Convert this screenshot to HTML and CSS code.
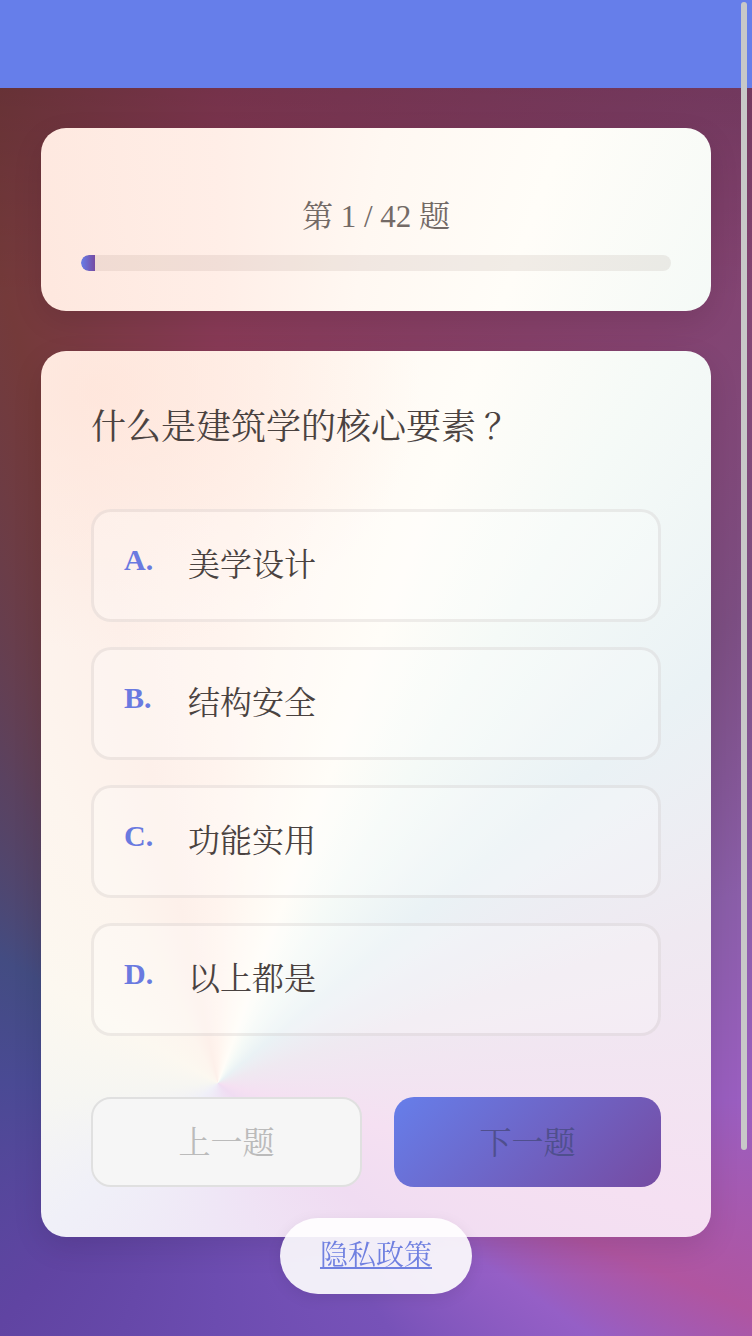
FILE: index.html
```html
<!DOCTYPE html>
<html lang="zh-CN">
<head>
<meta charset="utf-8">
<title>建筑学测验</title>
<link rel="stylesheet" href="styles.css">
</head>
<body>
<header class="topbar"></header>
<main class="quiz">
  <section class="card progress-card">
    <div class="progress-text">第 1 / 42 题</div>
    <div class="progress-track"><div class="progress-fill" style="width:2.38%"></div></div>
  </section>
  <section class="card question-card">
    <h2 class="question">什么是建筑学的核心要素<span class="qmark">？</span></h2>
    <div class="options">
      <div class="option"><span class="option-label">A.</span><span class="option-text">美学设计</span></div>
      <div class="option"><span class="option-label">B.</span><span class="option-text">结构安全</span></div>
      <div class="option"><span class="option-label">C.</span><span class="option-text">功能实用</span></div>
      <div class="option"><span class="option-label">D.</span><span class="option-text">以上都是</span></div>
    </div>
    <div class="nav">
      <button class="btn btn-prev" disabled>上一题</button>
      <button class="btn btn-next">下一题</button>
    </div>
  </section>
</main>
<a class="privacy" href="#">隐私政策</a>
<div class="scroll-thumb"></div>
</body>
</html>
```
FILE: styles.css
```css
html, body {
  margin: 0;
  padding: 0;
}

body {
  font-family: "Liberation Serif", "Noto Serif CJK SC", "Source Han Serif SC", "AR PL UMing CN", "AR PL New Sung", "SimSun", "Songti SC", serif;
  min-height: 100vh;
  background:
    linear-gradient(to bottom, rgba(0,0,0,0.14) 88px, rgba(0,0,0,0) 300px),
    conic-gradient(from 0deg at 217px 1083px,
      #883a56 0deg, #84426f 30deg, #7c4e82 48deg, #8a5ea8 70deg,
      #9a5ec0 92deg, #b055a0 113deg, #955fc6 124deg, #7752b8 145deg,
      #6c4cb0 180deg, #6044a2 222deg, #4a4a94 270deg, #434c82 300deg,
      #5a4260 325deg, #743a3a 345deg, #883a56 360deg);
}

.topbar {
  height: 88px;
  background: #667eea;
}

.quiz {
  max-width: 670px;
  margin: 0 auto;
  padding: 40px 0 315px;
  display: flex;
  flex-direction: column;
  gap: 40px;
}

.card {
  border-radius: 25px;
  box-shadow: 0 10px 30px rgba(0, 0, 0, 0.1);
  box-sizing: border-box;
}

.progress-card {
  padding: 40px;
  background: conic-gradient(from 0deg at 177px 955px,
    #ffeee7 0deg, #fff8f2 10deg, #fffdf8 20deg, #f5faf7 32deg, #eaf2f5 50deg,
    #efe9f1 72deg, #f5e0f2 105deg, #f0dcf2 130deg, #efe6f6 180deg,
    #f0f0f8 230deg, #f6f6f2 265deg, #fcf8f0 300deg, #fdf4ec 331deg,
    #fee8df 348deg, #ffeee7 360deg);
}

.progress-text {
  margin: 31px 0 20px;
  font-size: 31px;
  line-height: 36px;
  text-align: center;
  color: #736a66;
}

.progress-track {
  height: 16px;
  border-radius: 8px;
  background: rgba(120, 90, 80, 0.1);
  overflow: hidden;
}

.progress-fill {
  height: 100%;
  border-radius: 8px 0 0 8px;
  background: linear-gradient(90deg, #667eea, #764ba2);
}

.question-card {
  padding: 50px;
  background:
    radial-gradient(ellipse 320px 260px at 60px 40px, rgba(255, 226, 214, 0.7), rgba(255, 226, 214, 0)),
    conic-gradient(from 0deg at 177px 732px,
    #fff4ee 0deg, #fff9f3 10deg, #fffdf8 20deg, #f5faf7 32deg, #eaf2f5 50deg,
    #efe9f1 72deg, #f5e0f2 105deg, #f0dcf2 130deg, #efe6f6 180deg,
    #f0f0f8 230deg, #f6f6f2 265deg, #fcf8f0 300deg, #fdf5ee 331deg,
    #fdf0ea 348deg, #fff4ee 360deg);
}

.question {
  margin: 0 0 54px;
  font-size: 35px;
  font-weight: normal;
  line-height: 54px;
  color: #4a4240;
}

.qmark {
  margin-left: 8px;
}

.options {
  display: flex;
  flex-direction: column;
  gap: 25px;
}

.option {
  display: flex;
  align-items: flex-start;
  padding: 30px;
  border: 3px solid rgba(110, 90, 90, 0.1);
  border-radius: 20px;
  background: rgba(255, 255, 255, 0.25);
}

.option-label {
  width: 40px;
  margin-right: 24px;
  font-size: 30px;
  font-weight: bold;
  line-height: 36px;
  color: #6a7ae0;
}

.option-text {
  font-size: 32px;
  line-height: 47px;
  color: #4a4240;
}

.nav {
  display: flex;
  gap: 32px;
  margin-top: 61px;
}

.btn {
  flex: 1;
  height: 90px;
  padding: 0 0 4px;
  border-radius: 20px;
  font-family: inherit;
  font-size: 32px;
  box-sizing: border-box;
}

.btn-prev {
  background: #f6f6f6;
  border: 2px solid #e0e0e0;
  color: #bbbbbb;
}

.btn-next {
  border: none;
  background: linear-gradient(135deg, #667eea, #764ba2);
  color: #4f4f8e;
}

.privacy {
  position: fixed;
  left: 50%;
  bottom: 42px;
  transform: translateX(-50%);
  padding: 17px 40px;
  border-radius: 38px;
  background: rgba(255, 255, 255, 0.9);
  font-size: 28px;
  line-height: 42px;
  color: #7080e0;
  text-decoration: underline;
  white-space: nowrap;
  box-shadow: 0 4px 15px rgba(0, 0, 0, 0.08);
}

.scroll-thumb {
  position: fixed;
  top: 2px;
  right: 5px;
  width: 6px;
  height: 1148px;
  border-radius: 3px;
  background: #c8c8c8;
}
```
